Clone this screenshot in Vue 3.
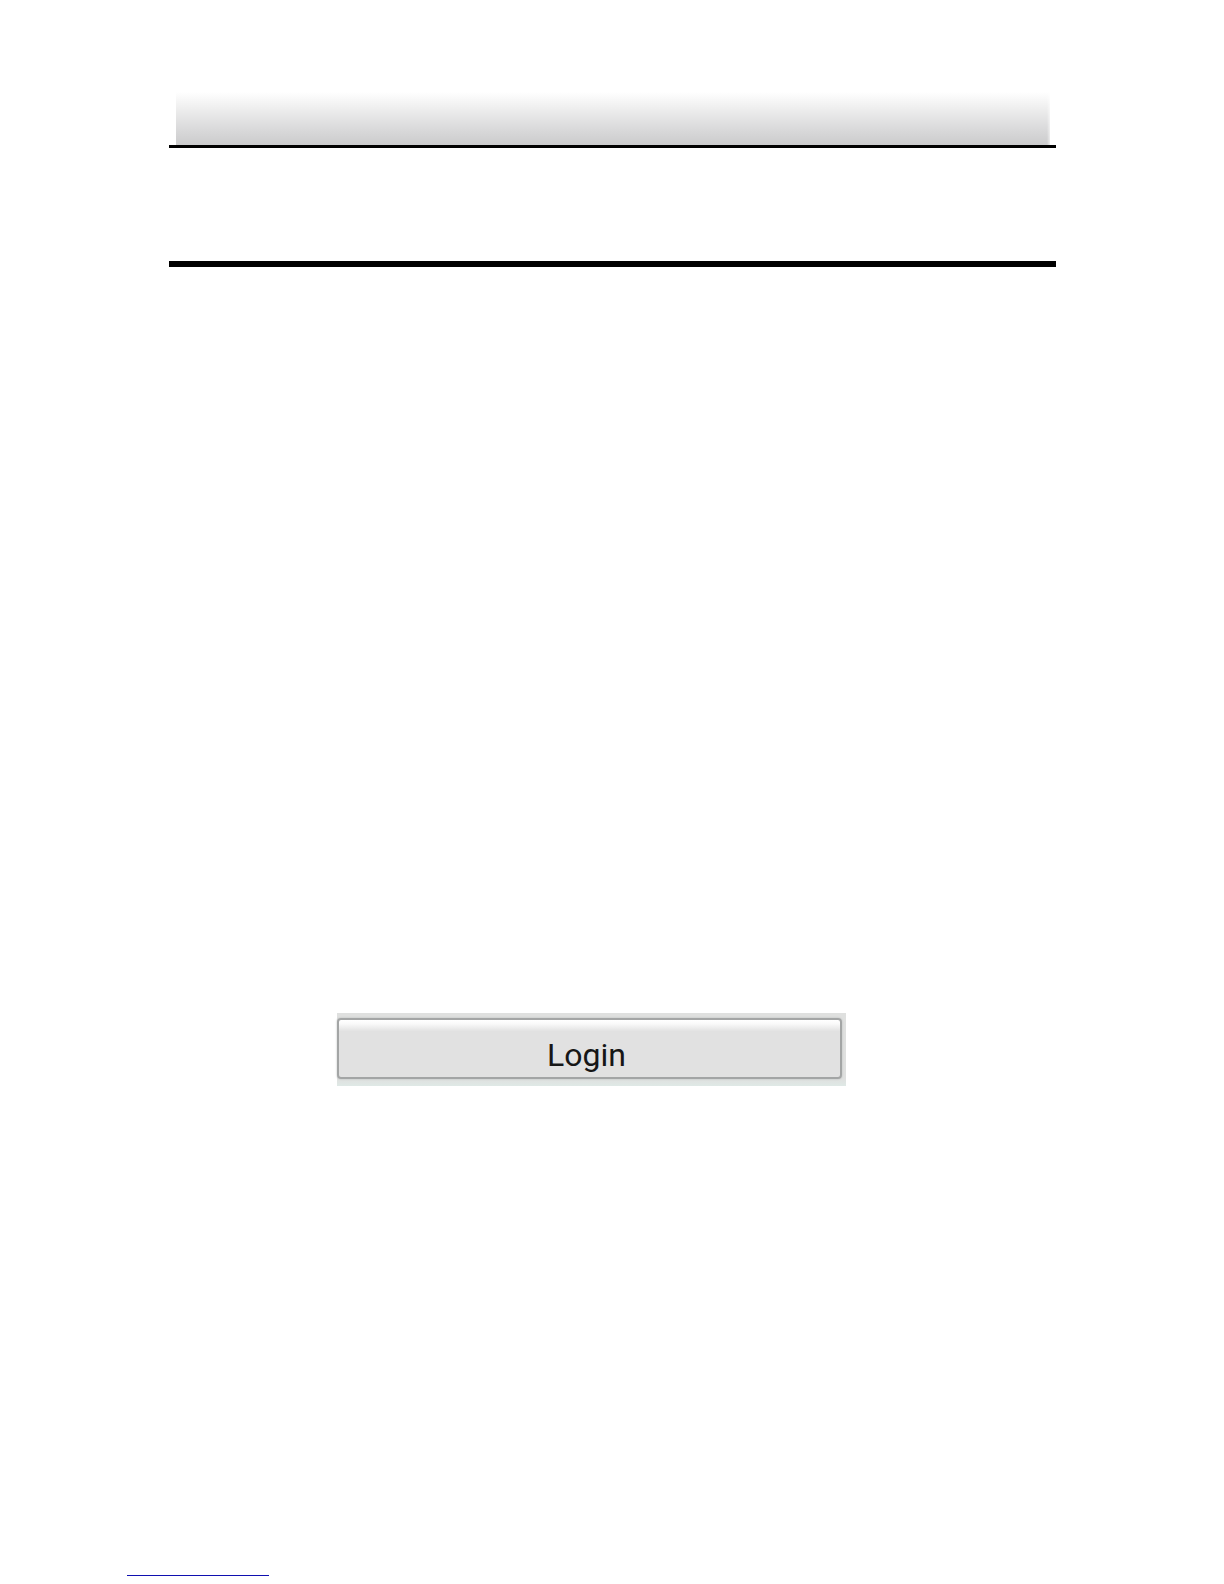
<script setup>
import { ref } from 'vue';

const submitting = ref(false);

function login() {
    submitting.value = true;
}
</script>

<template>
    <div class="page">
        <header>
            <div class="band"></div>
        </header>
        <main>
            <hr class="rule" />
            <form @submit.prevent="login">
                <div class="frame">
                    <button type="submit" :disabled="submitting">Login</button>
                </div>
            </form>
        </main>
        <footer>
            <hr class="note" />
        </footer>
    </div>
</template>

<style>
body {
    margin: 0;
    background: #fff;
}
</style>

<style scoped>
.page {
    box-sizing: border-box;
    display: flex;
    flex-direction: column;
    min-height: 100vh;
    padding: 92px 168px 8px 169px;
    font-family: Roboto, 'Liberation Sans', sans-serif;
}
header {
    padding: 0 6px 0 7px;
    border-bottom: 3px solid #000;
}
.band {
    height: 53px;
    background:
        linear-gradient(to left, rgba(255, 255, 255, 0.6), transparent 3px),
        linear-gradient(#fff, #ececec 35%, #dcdcdd 65%, #cbcbcc);
}
hr {
    margin: 0;
    border: 0;
}
.rule {
    height: 6px;
    margin-top: 113px;
    background: #000;
}
form {
    margin: 746px 210px 0 168px;
}
.frame {
    box-sizing: border-box;
    height: 73px;
    padding: 5px 4px 7px 0;
    background: linear-gradient(#dfe0df, #dfe0df 90%, #dfe9e6);
}
button {
    display: block;
    box-sizing: border-box;
    width: 100%;
    height: 100%;
    padding: 12px 6px 0 0;
    border: 2px solid #a3a5a5;
    border-radius: 4px;
    background: linear-gradient(#fff, #f9f9f9 7%, #e1e1e1 20%, #e1e1e1);
    box-shadow: 0 0 2px #b4b6b6;
    color: #161616;
    font-family: inherit;
    font-size: 32px;
    line-height: 36px;
    text-align: center;
}
footer {
    margin-top: auto;
    margin-left: -42px;
}
.note {
    width: 142px;
    height: 1px;
    background: #1010b0;
}
</style>
